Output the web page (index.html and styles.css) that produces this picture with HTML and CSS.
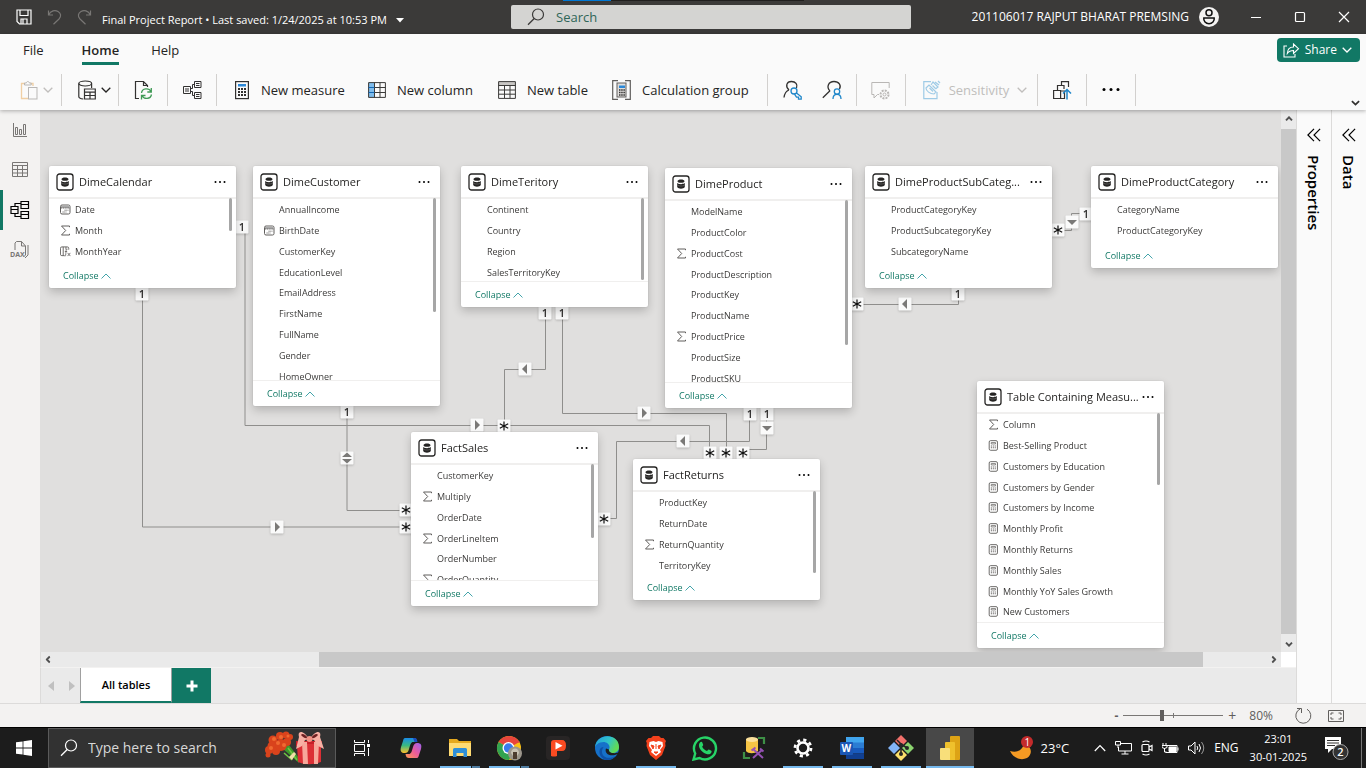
FILE: index.html
```html
<!DOCTYPE html>
<html lang="en">
<head>
<meta charset="utf-8">
<title>Final Project Report</title>
<link rel="stylesheet" href="styles.css">
</head>
<body>
<svg class="defs" aria-hidden="true">
  <symbol id="table" viewBox="0 0 18 18"><rect x="1" y="1" width="16" height="16" rx="2.500" fill="#fff" stroke="#252423" stroke-width="1.300"/><path d="M5.500 6.200C5.500 4 12.500 4 12.500 6.200S5.500 8.400 5.500 6.200z" fill="#252423"/><path d="M5.200 8c2 1.600 5.600 1.600 7.600 0v4c-1.200 2.300-6.400 2.300-7.600 0z" fill="#252423"/><path d="M5.500 10.300c2 1 5 1 7 0" stroke="#888" stroke-width=".5" fill="none"/></symbol>
  <symbol id="dots" viewBox="0 0 12 4"><circle cx="1.500" cy="2" r="1"/><circle cx="6" cy="2" r="1"/><circle cx="10.500" cy="2" r="1"/></symbol>
  <symbol id="sigma" viewBox="0 0 11 11"><path d="M9.500 2.200V1H1.500l4.200 4.500L1.500 10h8V8.800" fill="none" stroke="#605e5c"/></symbol>
  <symbol id="cal" viewBox="0 0 11 11"><rect x=".5" y="1" width="9.500" height="9" rx="1.500" fill="none" stroke="#605e5c"/><path d="M1 2h8.500v2H1z" fill="#aaa"/><path d="M1 4h9M4.500 6.200h4M2.500 8h4" stroke="#605e5c" stroke-width=".9" stroke-dasharray="1.200 .6"/></symbol>
  <symbol id="calcol" viewBox="0 0 12 12"><path d="M5 10.500H2A1.500 1.500 0 0 1 .5 9V2.500A1.500 1.500 0 0 1 2 1h6a1.500 1.500 0 0 1 1.500 1.500V4M3.500 1v9.500M6.500 1v3" fill="none" stroke="#605e5c"/><path d="M8.200 3.500c-1.800-.3-1.500 1.500-2 6.500-.1 1-.8 1-1.200.8M5.300 6h2.500M8.300 7.500l3 3.500m0-3.500-3 3.500" fill="none" stroke="#605e5c" stroke-width=".9"/></symbol>
  <symbol id="measure" viewBox="0 0 11 12"><rect x=".8" y=".7" width="9" height="10.500" rx="1.500" fill="none" stroke="#605e5c"/><path d="M3 2.800h4.700v1.500H3z" fill="none" stroke="#605e5c" stroke-width=".8"/><path d="M2.600 6.500h5.500M2.600 8.500h5.500" stroke="#605e5c" stroke-width="1.200" stroke-dasharray="1.200 .9"/></symbol>
  <symbol id="up" viewBox="0 0 10 6"><path d="M.5 5.500 5 1l4.500 4.500" fill="none" stroke="currentColor" stroke-width=".9"/></symbol>
  <symbol id="down" viewBox="0 0 10 6"><path d="M.7.800 5 5 9.300.800" fill="none" stroke="currentColor" stroke-width="1.300"/></symbol>
  <symbol id="lens" viewBox="0 0 18 18"><circle cx="11" cy="6.500" r="5.500" fill="none" stroke="currentColor" stroke-width="1.200"/><path d="M7.200 10.500 1 16.800" stroke="currentColor" stroke-width="1.300"/></symbol>
  <symbol id="dbl" viewBox="0 0 14 14"><path d="M7 .8.900 7 7 13.200M13.100.800 7 7l6.100 6.200" fill="none" stroke="#000" stroke-width="1.200"/></symbol>
  <symbol id="scr" viewBox="0 0 8 5"><path d="M1 4.300 4 1.300l3 3" fill="none" stroke="#505050" stroke-width="1.900"/></symbol>
  <symbol id="one" viewBox="-7 -7 14 14"><rect x="-6.500" y="-6.500" width="13" height="13" rx="1" fill="#fafafa"/></symbol>
  <symbol id="star" viewBox="-7 -7 14 14"><rect x="-6.500" y="-6.500" width="13" height="13" rx="1" fill="#fafafa"/><path d="M0-4.500v9M-4.200-2.300l8.400 4.600M4.200-2.300l-8.400 4.600" stroke="#111" stroke-width="1.200"/></symbol>
  <symbol id="ar" viewBox="-7 -7 14 14"><rect x="-6.500" y="-6.500" width="13" height="13" rx="1" fill="#fafafa"/><path d="M-2-5 3 0-2 5z" fill="#7a7977"/></symbol>
  <symbol id="al" viewBox="-7 -7 14 14"><rect x="-6.500" y="-6.500" width="13" height="13" rx="1" fill="#fafafa"/><path d="M2-5-3 0 2 5z" fill="#7a7977"/></symbol>
  <symbol id="ad" viewBox="-7 -7 14 14"><rect x="-6.500" y="-6.500" width="13" height="13" rx="1" fill="#fafafa"/><path d="M-5-2 0 3 5-2z" fill="#7a7977"/></symbol>
  <symbol id="ab" viewBox="-7 -7 14 14"><rect x="-6.500" y="-6.500" width="13" height="13" rx="1" fill="#fafafa"/><path d="M-5-1 0-5.500 5-1zM-5 1 0 5.500 5 1z" fill="#7a7977"/></symbol>
</svg>

<header class="title">
  <span class="peek"></span>
  <div class="title-left">
    <button aria-label="Save"><svg width="16" height="16" viewBox="0 0 16 16" fill="none" stroke="#fff" stroke-width="1.200"><path d="M1 1h14v14H3.500L1 12.500zM4 1v5.500h8V1M5 15v-5h6v5M7 10v5"/></svg></button>
    <button aria-label="Undo"><svg width="15" height="16" viewBox="0 0 15 16" fill="none" stroke="#797775" stroke-width="1.200"><path d="M1.500 1.500V6h4.500M1.500 6C4 1.500 8 .8 11 2.500s3.500 5 1 7.500l-5.500 5.200"/></svg></button>
    <button aria-label="Redo"><svg width="15" height="16" viewBox="0 0 15 16" fill="none" stroke="#797775" stroke-width="1.200"><path d="M13.500 1.500V6H9M13.500 6C11 1.500 7 .8 4 2.500s-3.500 5-1 7.500l5.500 5.200"/></svg></button>
    <button class="doc">Final Project Report • Last saved: 1/24/2025 at 10:53 PM <svg width="8" height="5" viewBox="0 0 8 5"><path d="M0 0h8L4 4.500z" fill="#fff"/></svg></button>
  </div>
  <label class="find"><svg width="18" height="18"><use href="#lens"/></svg><input type="text" placeholder="Search" aria-label="Search"></label>
  <div class="title-right">
    <span class="user">201106017 RAJPUT BHARAT PREMSING</span>
    <svg class="avatar" width="20" height="20" viewBox="0 0 20 20"><circle cx="10" cy="10" r="10" fill="#f3f2f1"/><circle cx="10" cy="5.800" r="3" fill="none" stroke="#111" stroke-width="1.500"/><path d="M4.800 11h10.400c.5 3-2 5.700-5.200 5.700S4.300 14 4.800 11z" fill="none" stroke="#111" stroke-width="1.500"/></svg>
    <button class="win" aria-label="Minimize"><svg width="12" height="12"><path d="M1 6.500h10" stroke="#fff"/></svg></button>
    <button class="win" aria-label="Maximize"><svg width="12" height="12"><rect x="1.500" y="1.500" width="9" height="9" rx="1" fill="none" stroke="#fff" stroke-width="1.200"/></svg></button>
    <button class="win" aria-label="Close"><svg width="12" height="12"><path d="M1 1l10 10M11 1 1 11" stroke="#fff" stroke-width="1.200"/></svg></button>
  </div>
</header>

<section class="ribbon">
  <nav class="menu">
    <a href="#file">File</a><a href="#home" class="on">Home</a><a href="#help">Help</a>
    <button class="share"><svg width="17" height="15" viewBox="0 0 17 15" fill="none" stroke="#fff" stroke-width="1.100"><path d="M4 3H1v11h11v-3"/><path d="M10.500 1v3C6 4 4.500 7 4.300 10.500 6 8 8 7.500 10.500 7.500v3L15.500 5.700z"/></svg><span>Share</span><svg width="10" height="6"><use href="#down"/></svg></button>
  </nav>
  <div class="tools">
    <div class="grp g-paste"><button class="off" aria-label="Paste" disabled><svg width="18" height="20" viewBox="0 0 18 20" fill="none"><path d="M5 3.500H1.500v15H8M10.500 3.500H13V6" stroke="#f0cfa4" stroke-width="1.300"/><path d="M4.500 5V3h1.800c.4-2 2.700-2 3.100 0h1.800v2z" stroke="#b9b7b5"/><rect x="8.500" y="7.500" width="8.500" height="11.500" stroke="#b9b7b5" fill="#fafafa"/></svg><svg width="10" height="6"><use href="#down"/></svg></button></div>
    <div class="grp g-data"><button aria-label="Get data"><svg width="18" height="20" viewBox="0 0 18 20" fill="none" stroke="#323130" stroke-width="1.200"><ellipse cx="7.200" cy="3.500" rx="6.400" ry="2.500"/><path d="M.8 3.500v13c0 1.300 2 2.300 4.500 2.500M13.600 3.500V8"/><path d="M6.500 9h10.800v10H6.500zM6.500 12.200h10.800M6.500 15.500h10.800M12 12v7" fill="#fafafa"/></svg><svg width="10" height="6"><use href="#down"/></svg></button></div>
    <div class="grp"><button aria-label="Refresh"><svg width="19" height="20" viewBox="0 0 19 20" fill="none"><path d="M5 18.500H1.500V1.500h8l4 4V7M9.500 1.500v4h4" stroke="#323130" stroke-width="1.200"/><path d="M7.500 13c.6-5 7.500-5.500 9.500-1.500M17.300 8v4h-4M17.500 14.500c-1 5-7.500 5-9.500 1.200M7.500 19.500v-4h4" stroke="#3f9a55" stroke-width="1.300"/></svg></button></div>
    <div class="grp"><button aria-label="Manage relationships"><svg width="19" height="20" viewBox="0 0 19 20" fill="none" stroke="#323130"><path d="M.5 6.500h7v7h-7zM11.500 1.500h6.500v6h-6.500zM11.500 12.500h6.500v6h-6.500zM2 9h4M2 11h4M13 3.500h3.500M13 5.500h3.500M13 14.500h3.500M13 16.500h3.500M7.500 8.500h2v-4h2M7.500 11.500h2v4h2"/></svg></button></div>
    <div class="grp g-calc">
      <button><svg width="16" height="20" viewBox="-1 0 16 20"><rect x=".6" y="1.600" width="12.800" height="17" fill="none" stroke="#323130" stroke-width="1.200"/><path d="M3 4h8v2.500H3z" fill="#2b88d8"/><path d="M3 9h8M3 12h8M3 15h8" stroke="#323130" stroke-width="2" stroke-dasharray="2 1"/></svg><span>New measure</span></button>
      <button><svg width="18" height="20" viewBox="0 0 18 20"><path d="M.5 2.500h6v15h-6z" fill="#7fbcec"/><path d="M.6 2.600h16.800v14.800H.6zM6.500 2.500v15M12 2.500v15M.5 7.500h17M.5 12.500h17" fill="none" stroke="#3b3a39"/><path d="M.5 7.500h6M.5 12.500h6" stroke="#1467b3"/></svg><span>New column</span></button>
      <button><svg width="18" height="20" viewBox="0 0 18 20"><path d="M.5 2h17v3H.5z" fill="#c8c6c4"/><path d="M.6 1.600h16.800v16.800H.6zM6.500 5v13M12 5v13M.5 5.500h17M.5 10h17M.5 14.200h17" fill="none" stroke="#3b3a39"/></svg><span>New table</span></button>
      <button><svg width="19" height="20" viewBox="0 0 19 20" fill="none"><path d="M6 .7H.7v18.600H6M13 .7h5.300v18.600H13" stroke="#605e5c" stroke-width="1.200"/><rect x="5" y="3" width="9" height="14" fill="#e1dfdd" stroke="#605e5c"/><path d="M7 5.500h6V8H7z" fill="#2b88d8"/><path d="M7 10h6M7 12.500h6M7 15h6" stroke="#323130" stroke-width="1.600" stroke-dasharray="1.500 .7"/></svg><span>Calculation group</span></button>
    </div>
    <div class="grp g-roles">
      <button aria-label="Manage roles"><svg width="20" height="20" viewBox="0 0 20 20" fill="none"><path d="M6 10C2 6.500 3.500 1.500 8.500 1.500c4 0 6.500 3 5 6.500M6 10C3 11 1.500 14 1 17.500" stroke="#323130" stroke-width="1.300"/><circle cx="11" cy="11" r="3" stroke="#1f86c9" stroke-width="1.300"/><path d="m13.200 12.800 5 4v2.400h-2.700v-2h-2l-2-3" stroke="#1f86c9" stroke-width="1.300"/></svg></button>
      <button aria-label="View as"><svg width="20" height="20" viewBox="0 0 20 20" fill="none"><path d="M8 11C4 7 6.500 1.500 12 1.500c5 0 7.500 4 5.500 7.500M8 10.700.8 17.800" stroke="#323130" stroke-width="1.300"/><circle cx="15" cy="11.500" r="2.700" stroke="#1f86c9" stroke-width="1.300"/><path d="M11 19c0-6.300 8-6.300 8 0" stroke="#1f86c9" stroke-width="1.300"/></svg></button>
    </div>
    <div class="grp"><button class="off" aria-label="Q&amp;A setup" disabled><svg width="20" height="20" viewBox="0 0 20 20" fill="none" stroke="#b9b7b5"><path d="M8 14.500H6.500L3 18v-3.500H.8v-12h17.400V8"/><circle cx="13.500" cy="14.500" r="1.500"/><circle cx="13.500" cy="14.500" r="4" stroke-width="2" stroke-dasharray="2 1.100"/></svg></button></div>
    <div class="grp g-sens"><button class="off" disabled><svg width="18" height="20" viewBox="0 0 18 20" fill="none" stroke="#9fcbe6" stroke-width="1.200"><path d="M8 1.600H.8v17H14V12"/><path d="m3 8 3-3 7 7-2 2c-4 0-8-3-8-6zM6.500 8l3.500 3.500M8 5l2-3 5 5-2.500 2M12 2l4 3M15 1l2 2M9.500 5.500l3 3"/></svg><span>Sensitivity</span><svg width="10" height="6"><use href="#down"/></svg></button></div>
    <div class="grp"><button aria-label="Publish"><svg width="19" height="20" viewBox="0 0 19 20" fill="none" stroke="#323130" stroke-width="1.200"><path d="M.6 10.500h7v8h-7zM4.500 10.500v-5H11V9M8.500 5.500V1.600h7V7M7.500 11h4v7.500h-4"/><path d="M14 19.500V9.500M10 13.500l4-4 4 4" stroke="#1f86c9" stroke-width="1.500"/></svg></button></div>
    <div class="grp"><button aria-label="More"><svg width="18" height="6" viewBox="0 0 18 6"><circle cx="2" cy="2.500" r="1.500"/><circle cx="9" cy="2.500" r="1.500"/><circle cx="16" cy="2.500" r="1.500"/></svg></button></div>
    <button class="fold" aria-label="Collapse ribbon"><svg width="9" height="6" viewBox="0 0 10 6"><path d="M1 1l4 3.800L9 1" fill="none" stroke="#323130" stroke-width="2"/></svg></button>
  </div>
</section>

<main class="work">
  <nav class="rail">
    <a href="#report" aria-label="Report view"><svg width="18" height="18" viewBox="0 0 18 18" fill="none" stroke="#797775"><path d="M2.500 2v13.500H16M4.500 6.500h2v7h-2zM8.500 8.500h2v5h-2zM12.500 3.500h2v10h-2z"/></svg></a>
    <a href="#data" aria-label="Table view"><svg width="18" height="18" viewBox="0 0 18 18" fill="none" stroke="#797775"><path d="M1.500 1.500h15v14h-15zM1.500 4.500h15M1.500 8.500h15M1.500 12h15M6.500 4.500v11M11.500 4.500v11"/></svg></a>
    <a href="#model" class="on" aria-label="Model view"><svg width="20" height="20" viewBox="0 0 20 20" fill="none" stroke="#000" stroke-width="1.200"><path d="M1 6.500h7v7H1zM11 1.500h7.500v7H11zM11 11.500h7.500v7H11zM1 9.500h7M11 4.500h7.500M11 14.500h7.500M5 6.500v-3h6M5 13.500v3h6"/></svg></a>
    <a href="#dax" aria-label="DAX query view"><svg width="20" height="20" viewBox="0 0 20 20" fill="none" stroke="#797775"><path d="M5 10V3l1.500-1.500h5L15.500 6v9L14 16.500M11.500 1.500V6h4M18 5v10l-3 3"/><text x="0" y="17" font-size="7" font-weight="700" fill="#797775" stroke="none">DAX</text></svg></a>
  </nav>

  <div class="stage">
    <div class="view">
      <div class="canvas">
        <svg class="links" width="1241" height="542" viewBox="40 110 1241 542">
          <g fill="none" stroke="#8f8e8c" stroke-width="1">
            <path d="M142.500 288v239H411M347 406v104.500H411M245 227v198.500h464.500V453M545.500 307v62.500h-41V426M562.500 307v106.500h164V453M749.500 408v33.500h-133v77H604M766.500 408v41.500H743M958.500 288v16.500H857M1086 213.500h-14.500v17H1058"/>
          </g>
          <g class="marks">
            <use href="#one" x="135" y="287" width="14" height="14"/><use href="#one" x="235" y="220" width="14" height="14"/><use href="#one" x="340" y="405" width="14" height="14"/><use href="#one" x="538" y="306" width="14" height="14"/><use href="#one" x="555" y="306" width="14" height="14"/><use href="#one" x="743" y="407" width="14" height="14"/><use href="#one" x="760" y="407" width="14" height="14"/><use href="#one" x="951" y="287" width="14" height="14"/><use href="#one" x="1079" y="207" width="14" height="14"/>
            <use href="#star" x="399" y="503" width="14" height="14"/><use href="#star" x="399" y="520" width="14" height="14"/><use href="#star" x="497" y="419" width="14" height="14"/><use href="#star" x="597" y="512" width="14" height="14"/><use href="#star" x="703" y="446" width="14" height="14"/><use href="#star" x="719" y="446" width="14" height="14"/><use href="#star" x="736" y="446" width="14" height="14"/><use href="#star" x="850" y="297" width="14" height="14"/><use href="#star" x="1051" y="223" width="14" height="14"/>
            <use href="#ar" x="270" y="520" width="14" height="14"/><use href="#ar" x="470" y="418" width="14" height="14"/><use href="#ar" x="637" y="406" width="14" height="14"/>
            <use href="#al" x="518" y="362" width="14" height="14"/><use href="#al" x="676" y="434" width="14" height="14"/><use href="#al" x="898" y="297" width="14" height="14"/>
            <use href="#ad" x="760" y="421" width="14" height="14"/><use href="#ad" x="1065" y="215" width="14" height="14"/><use href="#ab" x="340" y="451" width="14" height="14"/>
          </g>
          <g class="ones"><text x="142" y="298">1</text><text x="242" y="231">1</text><text x="347" y="416">1</text><text x="545" y="317">1</text><text x="562" y="317">1</text><text x="750" y="418">1</text><text x="767" y="418">1</text><text x="958" y="298">1</text><text x="1086" y="218">1</text></g>
        </svg>

        <article class="node calendar"><h2><svg width="18" height="18"><use href="#table"/></svg><span>DimeCalendar</span><button aria-label="More options"><svg width="12" height="4"><use href="#dots"/></svg></button></h2>
          <ul><li><svg><use href="#cal"/></svg>Date</li><li><svg><use href="#sigma"/></svg>Month</li><li><svg><use href="#calcol"/></svg>MonthYear</li></ul><i class="thumb"></i>
          <button class="less">Collapse <svg width="10" height="6"><use href="#up"/></svg></button></article>

        <article class="node customer"><h2><svg width="18" height="18"><use href="#table"/></svg><span>DimeCustomer</span><button aria-label="More options"><svg width="12" height="4"><use href="#dots"/></svg></button></h2>
          <ul><li>AnnualIncome</li><li><svg><use href="#cal"/></svg>BirthDate</li><li>CustomerKey</li><li>EducationLevel</li><li>EmailAddress</li><li>FirstName</li><li>FullName</li><li>Gender</li><li>HomeOwner</li></ul><i class="thumb"></i>
          <button class="less ruled">Collapse <svg width="10" height="6"><use href="#up"/></svg></button></article>

        <article class="node teritory"><h2><svg width="18" height="18"><use href="#table"/></svg><span>DimeTeritory</span><button aria-label="More options"><svg width="12" height="4"><use href="#dots"/></svg></button></h2>
          <ul><li>Continent</li><li>Country</li><li>Region</li><li>SalesTerritoryKey</li></ul><i class="thumb"></i>
          <button class="less ruled">Collapse <svg width="10" height="6"><use href="#up"/></svg></button></article>

        <article class="node product"><h2><svg width="18" height="18"><use href="#table"/></svg><span>DimeProduct</span><button aria-label="More options"><svg width="12" height="4"><use href="#dots"/></svg></button></h2>
          <ul><li>ModelName</li><li>ProductColor</li><li><svg><use href="#sigma"/></svg>ProductCost</li><li>ProductDescription</li><li>ProductKey</li><li>ProductName</li><li><svg><use href="#sigma"/></svg>ProductPrice</li><li>ProductSize</li><li>ProductSKU</li></ul><i class="thumb"></i>
          <button class="less ruled">Collapse <svg width="10" height="6"><use href="#up"/></svg></button></article>

        <article class="node subcategory"><h2><svg width="18" height="18"><use href="#table"/></svg><span>DimeProductSubCateg...</span><button aria-label="More options"><svg width="12" height="4"><use href="#dots"/></svg></button></h2>
          <ul><li>ProductCategoryKey</li><li>ProductSubcategoryKey</li><li>SubcategoryName</li></ul>
          <button class="less">Collapse <svg width="10" height="6"><use href="#up"/></svg></button></article>

        <article class="node category"><h2><svg width="18" height="18"><use href="#table"/></svg><span>DimeProductCategory</span><button aria-label="More options"><svg width="12" height="4"><use href="#dots"/></svg></button></h2>
          <ul><li>CategoryName</li><li>ProductCategoryKey</li></ul>
          <button class="less">Collapse <svg width="10" height="6"><use href="#up"/></svg></button></article>

        <article class="node sales"><h2><svg width="18" height="18"><use href="#table"/></svg><span>FactSales</span><button aria-label="More options"><svg width="12" height="4"><use href="#dots"/></svg></button></h2>
          <ul><li>CustomerKey</li><li><svg><use href="#sigma"/></svg>Multiply</li><li>OrderDate</li><li><svg><use href="#sigma"/></svg>OrderLineItem</li><li>OrderNumber</li><li><svg><use href="#sigma"/></svg>OrderQuantity</li></ul><i class="thumb"></i>
          <button class="less ruled">Collapse <svg width="10" height="6"><use href="#up"/></svg></button></article>

        <article class="node returns"><h2><svg width="18" height="18"><use href="#table"/></svg><span>FactReturns</span><button aria-label="More options"><svg width="12" height="4"><use href="#dots"/></svg></button></h2>
          <ul><li>ProductKey</li><li>ReturnDate</li><li><svg><use href="#sigma"/></svg>ReturnQuantity</li><li>TerritoryKey</li></ul><i class="thumb"></i>
          <button class="less">Collapse <svg width="10" height="6"><use href="#up"/></svg></button></article>

        <article class="node measures"><h2><svg width="18" height="18"><use href="#table"/></svg><span>Table Containing Measu...</span><button aria-label="More options"><svg width="12" height="4"><use href="#dots"/></svg></button></h2>
          <ul><li><svg><use href="#sigma"/></svg>Column</li><li><svg><use href="#measure"/></svg>Best-Selling Product</li><li><svg><use href="#measure"/></svg>Customers by Education</li><li><svg><use href="#measure"/></svg>Customers by Gender</li><li><svg><use href="#measure"/></svg>Customers by Income</li><li><svg><use href="#measure"/></svg>Monthly Profit</li><li><svg><use href="#measure"/></svg>Monthly Returns</li><li><svg><use href="#measure"/></svg>Monthly Sales</li><li><svg><use href="#measure"/></svg>Monthly YoY Sales Growth</li><li><svg><use href="#measure"/></svg>New Customers</li></ul><i class="thumb"></i>
          <button class="less ruled">Collapse <svg width="10" height="6"><use href="#up"/></svg></button></article>
      </div>
      <div class="vbar"><svg width="8" height="5"><use href="#scr"/></svg><span></span><svg class="r180" width="8" height="5"><use href="#scr"/></svg></div>
    </div>
    <div class="hrow"><div class="hbar"><svg class="r270" width="8" height="5"><use href="#scr"/></svg><span></span><svg class="r90" width="8" height="5"><use href="#scr"/></svg></div></div>
    <div class="tabs">
      <button class="step" aria-label="Previous"><svg width="6" height="10"><path d="M6 0v10L0 5z" fill="#c0c0c0"/></svg></button>
      <button class="step" aria-label="Next"><svg width="6" height="10"><path d="M0 0v10l6-5z" fill="#c0c0c0"/></svg></button>
      <button class="tab">All tables</button>
      <button class="add" aria-label="Add layout"><svg width="12" height="12"><path d="M6 .5v11M.5 6h11" stroke="#fff" stroke-width="3"/></svg></button>
    </div>
  </div>

  <aside class="pane"><svg width="14" height="14"><use href="#dbl"/></svg><h3>Properties</h3></aside>
  <aside class="pane"><svg width="14" height="14"><use href="#dbl"/></svg><h3>Data</h3></aside>
</main>

<footer class="status">
  <button class="minus">-</button><input type="range" min="0" max="100" value="38" aria-label="Zoom"><button class="plus">+</button>
  <span class="pct">80%</span>
  <button aria-label="Reset zoom"><svg width="18" height="18" viewBox="0 0 18 18" fill="none" stroke="#605e5c"><path d="M12 2.200a7.500 7.500 0 1 1-7-.2M2 1.500h4.500V6"/></svg></button>
  <button class="fit" aria-label="Fit to page"><svg width="16" height="12" viewBox="0 0 16 12" fill="none" stroke="#605e5c"><path d="M.5.5h15v11H.5zM3 5V3h2.500M10.500 3H13v2M13 7v2h-2.500M5.500 9H3V7"/></svg></button>
</footer>

<div class="taskbar">
  <button class="start" aria-label="Start"><svg width="16" height="16" viewBox="0 0 16 16" fill="#fff"><path d="M0 2.300 6.600 1.400v6.200H0zM7.400 1.300 16 0v7.600H7.400zM0 8.400h6.600v6.200L0 13.700zM7.400 8.400H16V16l-8.600-1.200z"/></svg></button>
  <label class="search"><svg width="18" height="18"><use href="#lens"/></svg><input type="text" placeholder="Type here to search" aria-label="Type here to search">
    <svg width="60" height="34" viewBox="0 0 60 34"><path d="m18 17 7-3 10 13v5z" fill="#3e9a2a"/><path d="m20 22 8 7M24 17l9 12" stroke="#6fc646" stroke-width="1.500"/><path d="m25 26 5-5 2 2-4 6z" fill="#efe0a8"/><g fill="#d9431c"><circle cx="9" cy="9" r="4.500"/><circle cx="16" cy="5" r="4"/><circle cx="22" cy="4" r="3.500"/><circle cx="26" cy="6" r="3"/><circle cx="8" cy="15" r="4.500"/><circle cx="5" cy="19" r="4"/><circle cx="4" cy="24" r="2.500"/><circle cx="12" cy="20" r="4"/><circle cx="17" cy="14" r="6"/><circle cx="23" cy="11" r="4"/></g><g fill="#ef6a31"><circle cx="10" cy="8" r="2"/><circle cx="17" cy="6" r="2"/><circle cx="14" cy="12" r="2"/><circle cx="20" cy="14" r="2"/><circle cx="7" cy="17" r="2"/><circle cx="24" cy="5" r="1.500"/></g><path d="M32 10h26v5H32z" fill="#c71f28"/><path d="m33 13 1 18c7 3 15 3 23 0V13z" fill="#dc2f35"/><path d="m38 11 1 22h5l-1-22zM50 11v22h4l1-22z" fill="#f7a79a"/><path d="M45 8C40-1 33-1 35 6l-3 12 6-3 3-6zM46 8C51-1 58-1 56 6l4 12-6-3-4-6z" fill="#f7b0a4"/><path d="M44 7c-3-4-6-5-7-3 2 2 4 4 7 3zM47 7c3-4 6-5 7-3-2 2-4 4-7 3z" fill="#6e2021"/><circle cx="45.500" cy="8" r="3" fill="#f29284"/></svg></label>
  <div class="apps">
    <button aria-label="Task view"><svg width="18" height="18" viewBox="0 0 18 18" fill="none" stroke="#fff"><path d="M1.500 1v2.500h10V1M1.500 5.500h10v7h-10zM1.500 17v-2.500h10V17M15.500 1v3M15.500 9v8"/><path d="M14 5h3v3h-3z" fill="#fff" stroke="none"/></svg></button>
    <button aria-label="Copilot"><svg width="22" height="22" viewBox="0 0 22 22"><defs><linearGradient id="c1" x1="0" y1="0" x2="0" y2="1"><stop stop-color="#1a8ce8"/><stop offset=".5" stop-color="#39b980"/><stop offset="1" stop-color="#ffc02b"/></linearGradient><linearGradient id="c2" x1="1" y1="0" x2="0" y2="1"><stop stop-color="#9a62ef"/><stop offset=".5" stop-color="#ec5b9b"/><stop offset="1" stop-color="#ff9a4c"/></linearGradient></defs><path d="M5 1h9c2 0 2.500 1.500 3 4h-4c-2 0-2.500 2-4 7-.8 3-2 4-4 4C1 16 0 14 1 10L3 4c.4-2 1-3 2-3z" fill="url(#c1)"/><path d="M17 21H9c-2 0-3-1-3.500-4h3.500c2 0 2.600-2 4-7 1-3 2-4 4-4 4 0 5 2 4 6l-2 6c-.5 2-1 3-2 3z" fill="url(#c2)"/><path d="M13 1h2c1.500 0 2 1.500 2.500 4h-3z" fill="#1c4bbf"/></svg></button>
    <button class="run more" aria-label="File Explorer"><svg width="22" height="20" viewBox="0 0 22 20"><path d="M0 1h8l2 2h12v15H0z" fill="#e5a91f"/><path d="M0 5h22v13H0z" fill="#ffdb73"/><path d="M4 11.500q0-1.500 1.500-1.500h11q1.500 0 1.500 1.500V19h-3.500v-4h-7v4H4z" fill="#2f8fd8"/></svg></button>
    <button class="run more" aria-label="Chrome"><svg width="27" height="26" viewBox="0 0 27 26"><circle cx="13" cy="13" r="12" fill="#fbc116"/><path d="M13 13 2.600 7a12 12 0 0 1 20.800 0z" fill="#e8453c"/><path d="M13 13 2.600 7A12 12 0 0 0 13 25l5-9z" fill="#32a350"/><path d="M13 7h10.400" stroke="#e8453c"/><circle cx="12.500" cy="13" r="6" fill="#fff"/><circle cx="12.500" cy="13" r="4.700" fill="#3a7cec"/><circle cx="19" cy="18.500" r="7" fill="#9c968b"/><path d="M15 18c0-6 8-6 8 0l-2 3h-4z" fill="#c9c2b3"/><path d="M17 17h4v7h-4z" fill="#4d3c2f"/></svg></button>
    <button aria-label="Presenter"><svg width="24" height="24" viewBox="0 0 24 24"><rect width="24" height="24" rx="4" fill="#282525"/><path d="M5 20V7q0-3 3-3h8q4 0 4 5.500T16 15h-5v5q-3 1-6 0z" fill="#fb4b22"/><path d="m9.500 6 7 3.700-7 3.800z" fill="#fff"/></svg></button>
    <button aria-label="Edge"><svg width="26" height="26" viewBox="0 0 26 26"><defs><linearGradient id="e1" x1="0" y1="0" x2="1" y2=".4"><stop stop-color="#229de0"/><stop offset=".6" stop-color="#31c4c7"/><stop offset="1" stop-color="#61da56"/></linearGradient></defs><circle cx="13" cy="13" r="12" fill="#1671c9"/><path d="M1 13C1-2 25-3 25 12c0 4-3 6-7 6-3 0-4.500-1-3.500-3 3-4-1-8-5-8C5 7 1 10 1 13z" fill="url(#e1)"/><path d="M9.500 12c-5 8 3 14 12 9-6 8-17 3-16-5 .4-3 2-4 4-4z" fill="#0e51a7"/><path d="M12 13.500c-2 5 4 9 12 5.500l1.500-2c-4 2-11 1.500-10.500-2.500z" fill="#1f1f1f"/></svg></button>
    <button class="run" aria-label="Brave"><svg width="20" height="24" viewBox="0 0 20 24"><path d="m5 2 2-2h6l2 2 2.500 0L20 5l-.8 2 .3 3-3.500 9-6 5-6-5L.5 10l.3-3L0 5l2.500-3z" fill="#f3411c"/><path d="m3.500 6 4-1L10 6l2.500-1 4 1 .5 4-3 4 1 2-5 4-5-4 1-2-3-4z" fill="#fff"/><path d="m5 9 3 1-1 3zm10 0-3 1 1 3zM8 16h4l-2 1.500zM10 8v5" fill="#f3411c" stroke="#f3411c"/></svg></button>
    <button aria-label="WhatsApp"><svg width="26" height="26" viewBox="0 0 26 26"><path d="m1.500 24.500 1.700-6A11 11 0 1 1 7.500 23z" fill="none" stroke="#27d367" stroke-width="2.400"/><path d="M8 7.500c1-1.200 2-.8 2.300 0l.9 2.200c.2.700-.8 1.500-1 2 1 2 2.500 3.500 4.800 4.300.6-.4 1.200-1.700 1.900-1.500l2.400 1.200c.9.600 0 2.600-1.300 3.200-3 1.500-8.500-2-10.500-6-1-2-.6-4.400.5-5.400z" fill="#27d367"/></svg></button>
    <button aria-label="SQL Server"><svg width="24" height="24" viewBox="0 0 24 24"><path d="M16 2h6v6M2 16v6h6" fill="none" stroke="#3d8f46" stroke-width="2.200"/><path d="M4 3v12c2 3 9 3 12 0V3z" fill="#f5c445"/><ellipse cx="10" cy="3.500" rx="6" ry="2.500" fill="#fbe09b"/><path d="m11 13 10 9M20 14l-9 8M9.500 14.500l4-3M18 12.500l3.500 3" stroke="#9551b4" stroke-width="2"/></svg></button>
    <button class="run" aria-label="Settings"><svg width="20" height="20" viewBox="0 0 20 20" fill="none" stroke="#fff"><circle cx="10" cy="10" r="5.500" stroke-width="2.600"/><circle cx="10" cy="10" r="8" stroke-width="2.800" stroke-dasharray="3.140 3.140"/></svg></button>
    <button class="run" aria-label="Word"><svg width="24" height="22" viewBox="0 0 24 22"><path d="M6 0h18v6H6z" fill="#41a5ee"/><path d="M6 5.500h18V11H6z" fill="#2b7cd3"/><path d="M6 11h18v5.500H6z" fill="#185abd"/><path d="M6 16.500h18V22H6z" fill="#103f91"/><rect y="5" width="13" height="13" rx="1" fill="#1b57b5"/><text x="1.500" y="15" font-size="10" font-weight="700" fill="#fff">W</text></svg></button>
    <button class="run" aria-label="Git"><svg width="26" height="26" viewBox="0 0 26 26"><path d="m13 0 6 6-6 6-6-6z" fill="#f2706b"/><path d="m6 7 6 6-6 6-6-6z" fill="#82b4f7"/><path d="m20 7 6 6-6 6-6-6z" fill="#8bd46f"/><path d="m13 14 6 6-6 6-6-6z" fill="#fbdf6b"/><path d="M9 5l4 4v10M13 9l6 4" fill="none" stroke="#262626" stroke-width="1.600"/><circle cx="13" cy="10" r="2" fill="#262626"/><circle cx="19" cy="13" r="2" fill="#262626"/><circle cx="13" cy="19" r="2" fill="#262626"/></svg></button>
    <button class="run active" aria-label="Power BI"><svg width="20" height="24" viewBox="0 0 20 24"><rect x="10" width="10" height="24" rx="1" fill="#dda315"/><path d="M5 7q0-1 1-1h8q1 0 1 1v17H5z" fill="#efc12c"/><path d="M0 13q0-1 1-1h8q1 0 1 1v11H1q-1 0-1-1z" fill="#f8df7a"/></svg></button>
  </div>
  <div class="tray">
    <span class="weather"><svg width="24" height="24" viewBox="0 0 24 24"><path d="M0 15c6 2 12 0 14-7 8 2 9 10 3 14C11 25 3 22 0 15z" fill="#f49a23"/><circle cx="17" cy="6" r="6" fill="#c42b2b"/><text x="14.500" y="10" font-size="10" fill="#fff">1</text></svg>23°C</span>
    <svg width="12" height="8" viewBox="0 0 12 8" fill="none" stroke="#fff" stroke-width="1.200"><path d="m.8 7 5.200-5.500L11.200 7"/></svg>
    <svg width="17" height="14" viewBox="0 0 17 14" fill="none" stroke="#fff"><path d="M6 2.500h10.500v7.500H3.500V6M10 10v3M6.500 13h7M.5.500h5v3.500h-5zM3 4v3"/></svg>
    <svg width="12" height="16" viewBox="0 0 12 16" fill="none" stroke="#fff" stroke-width="1.200"><rect x="1" y="4.500" width="7" height="7" rx="1"/><path d="m8 7 3-1.500v5L8 9M1.500 2q3.500-2 7 0M1.500 14q3.500 2 7 0"/></svg>
    <svg width="17" height="12" viewBox="0 0 17 12" fill="none" stroke="#fff"><path d="M5 3.500h10v7H3.500"/><path d="M7 5h7v4.500H7z" fill="#fff"/><path d="M16 5.500v3M1 1v2M4 1v2M0 3.500h5v2q-2.500 2-5 0zM2.500 6v4h2"/></svg>
    <svg width="17" height="14" viewBox="0 0 17 14" fill="none" stroke="#fff"><path d="M.5 5h2.500l4-4v12L3 9H.500zM9 5q1.500 2 0 4M11 3q3 4 0 8"/><path d="M13.500 1q4.500 6 0 12" stroke="#999"/></svg>
    <span class="lang">ENG</span>
    <time>23:01<br>30-01-2025</time>
    <button class="note" aria-label="Notifications"><svg width="26" height="26" viewBox="0 0 26 26"><path d="M1 2h16v12H8l-4 4v-4H1z" fill="#fff"/><path d="M3 5.500h12M3 8h12M3 10.500h8" stroke="#333"/><circle cx="16.500" cy="17" r="7.500" fill="#333" stroke="#aaa"/><text x="13.300" y="21" font-size="11" font-weight="600" fill="#fff">2</text></svg></button>
  </div>
</div>
</body>
</html>
```

FILE: styles.css
```css
* { box-sizing: border-box; }
html, body { height: 100%; }
body { margin: 0; display: flex; flex-direction: column; overflow: hidden; font: 13px/20px "Open Sans", "Noto Sans", sans-serif; color: #252423; background: #f3f2f1; }
button { border: 0; padding: 0; margin: 0; background: none; font: inherit; color: inherit; display: flex; align-items: center; }
svg { display: block; flex: none; }
a { color: inherit; text-decoration: none; }
.defs { position: absolute; width: 0; height: 0; }

.title { position: relative; flex: none; height: 34px; display: grid; grid-template-columns: 511fr 400fr 455fr; align-items: center; background: #3b3a39; color: #fff; font-size: 11px; }
.peek { position: absolute; left: 563px; top: 0; width: 241px; height: 1px; background: linear-gradient(90deg, #0078d4 48px, #201f1e 48px); }
.title-left { display: flex; align-items: center; gap: 15px; padding-left: 16px; }
.title-left .doc { gap: 9px; margin-left: -5px; padding-top: 6px; white-space: nowrap; }
.find { display: flex; align-items: center; gap: 11px; height: 24px; padding-left: 16px; background: #d4d4d2; border-radius: 2px; color: #3b3a39; }
.find input { flex: 1; min-width: 0; border: 0; padding: 0; background: none; font: inherit; font-size: 13px; outline: 0; }
.find input::placeholder { color: #2f6658; opacity: 1; }
.title-right { display: flex; align-items: center; justify-content: flex-end; padding-right: 16px; }
.user { font-size: 12px; white-space: nowrap; }
.avatar { margin: 0 31px 0 10px; }
.win + .win { margin-left: 32px; }

.ribbon { position: relative; z-index: 2; flex: none; height: 76px; background: #fafafa; box-shadow: 0 1px 4px rgba(0,0,0,.3); }
.menu { display: flex; align-items: flex-start; height: 36px; padding: 0 6px 0 23px; }
.menu a { height: 31px; padding-top: 6px; border-bottom: 3px solid transparent; margin-right: 32px; }
.menu a:first-child { margin-right: 38px; }
.menu .on { font-weight: 600; border-color: #117865; }
.share { margin-left: auto; margin-top: 4px; height: 24px; padding: 0 8px 0 6px; gap: 5px; border-radius: 4px; background: #117865; color: #fff; font-size: 12px; }
.tools { display: flex; align-items: center; height: 40px; }
.grp { height: 32px; width: 49px; display: flex; align-items: center; justify-content: center; border-right: 1px solid #d2d0ce; }
.grp button { gap: 5px; white-space: nowrap; }
.g-paste { width: 62px; padding-left: 12px; }
.g-data { width: 57px; padding-left: 9px; }
.g-calc { width: 551px; display: grid; grid-template-columns: 134px 130px 114px 1fr; justify-content: start; padding-left: 17px; }
.grp.g-calc button { gap: 11px; }
.g-roles { width: 89px; gap: 19px; }
.g-sens { width: 132px; padding-left: 7px; }
.grp.g-sens button { gap: 8px; }
.off { color: #c0bebc; }
.fold { margin: 26px 6px 0 auto; }

.work { flex: 1; min-height: 0; display: flex; }
.rail { width: 40px; flex: none; background: #f3f2f1; }
.rail a { height: 40px; display: flex; align-items: center; justify-content: center; border-left: 3px solid transparent; padding-right: 3px; }
.rail .on { border-color: #117865; }
.stage { flex: 1; min-width: 0; display: flex; flex-direction: column; }
.view { flex: 1; min-height: 0; display: flex; }
.canvas { position: relative; flex: 1; min-width: 0; overflow: hidden; background: #e0dfde; }
.links { position: absolute; left: 0; top: 0; }
.marks { filter: drop-shadow(0 1px 1px rgba(0,0,0,.2)); }
.ones { font-size: 11px; font-weight: 600; fill: #323130; text-anchor: middle; }

.node { position: absolute; width: 187px; background: #fff; border-radius: 2px; box-shadow: 0 4px 10px rgba(0,0,0,.2), 0 0 2px rgba(0,0,0,.12); }
.node h2 { margin: 0; height: 33px; display: flex; align-items: center; gap: 5px; padding: 0 10px 0 7px; border-bottom: 2px solid #f0efee; font-size: 11px; font-weight: 400; white-space: nowrap; }
.node h2 button { margin-left: auto; }
.node h2 span { flex: 0 1 auto; min-width: 0; }
.node ul { list-style: none; margin: 0; padding: 0; overflow: hidden; }
.node li { position: relative; height: 21px; line-height: 21px; padding-left: 26px; font-size: 9px; color: #3b3a39; white-space: nowrap; }
.node li:nth-child(5n + 4) { height: 20px; }
.node li svg { position: absolute; left: 11px; top: 5px; width: 11px; height: 11px; }
.thumb { position: absolute; right: 4px; top: 32px; width: 3px; border-radius: 2px; background: #a6a6a6; }
.less { width: 100%; height: 26px; gap: 3px; padding-left: 14px; font-size: 9px; color: #117865; border-top: 1px solid transparent; }
.less svg { color: #2e9aa0; }
.less.ruled { border-color: #f0efee; }
.calendar { left: 9px; top: 56px; } .calendar .thumb { height: 33px; }
.customer { left: 213px; top: 56px; } .customer ul { height: 181px; } .customer .thumb { height: 114px; }
.teritory { left: 421px; top: 56px; } .teritory ul, .returns ul { height: 82px; } .teritory .thumb, .returns .thumb { height: 82px; }
.product { left: 625px; top: 58px; } .product ul { height: 181px; } .product .thumb { height: 145px; }
.subcategory { left: 825px; top: 56px; }
.category { left: 1051px; top: 56px; } .category ul { padding-bottom: 1px; }
.sales { left: 371px; top: 322px; } .sales ul { height: 115px; } .sales .thumb { height: 74px; }
.returns { left: 593px; top: 349px; }
.measures { left: 937px; top: 271px; } .measures ul { height: 208px; } .measures .thumb { height: 72px; }

.vbar { width: 15px; flex: none; display: flex; flex-direction: column; align-items: center; gap: 8px; padding: 6px 0 5px; background: #eaeaea; }
.vbar span { flex: 1; width: 100%; background: #c8c8c8; }
.hrow { flex: none; display: flex; height: 16px; padding-right: 15px; border-bottom: 1px solid #f3f2f1; border-left: 1px solid #dcdbda; background: #fff; }
.hbar { flex: 1; display: flex; align-items: center; padding: 0 3px; background: #eaeaea; }
.hbar span { flex: 1; height: 15px; margin-left: 267px; margin-right: 67px; background: #c8c8c8; }
.r90 { transform: rotate(90deg); } .r180 { transform: rotate(180deg); } .r270 { transform: rotate(270deg); }
.tabs { flex: none; display: flex; height: 35px; background: #eaeaea; border-left: 1px solid #dcdbda; }
.step { width: 19px; justify-content: center; }
.step + .step { width: 20px; padding-left: 3px; }
.tab { width: 92px; justify-content: center; background: #fff; border: 1px solid #a0a0a0; border-top: 0; border-bottom: 2px solid #117865; font-size: 11px; font-weight: 600; color: #000; }
.add { width: 39px; justify-content: center; background: #117865; }
.pane { flex: none; width: 35px; padding-top: 18px; background: #fafafa; border-left: 1px solid #dcdbda; display: flex; flex-direction: column; align-items: center; }
.pane h3 { margin: 13px 0 0; writing-mode: vertical-rl; font-size: 15px; font-weight: 600; color: #000; }

.status { flex: none; height: 24px; display: flex; align-items: center; justify-content: flex-end; padding-right: 22px; border-top: 1px solid #dcdbda; color: #605e5c; font-size: 12px; }
.status .minus { font-weight: 700; }
.status .plus { font-size: 14px; margin: 0 13px 0 5px; }
.status .pct { margin-right: 22px; }
.status .fit { margin-left: 15px; }
.status input { appearance: none; width: 100px; height: 12px; margin: 0 0 0 5px; background: linear-gradient(#797775, #797775) 50px 50% / 1px 5px no-repeat, linear-gradient(#797775, #797775) 0 50% / 100% 1px no-repeat; }
.status input::-webkit-slider-thumb { appearance: none; width: 4px; height: 11px; background: #605e5c; }

.taskbar { flex: none; height: 41px; display: flex; background: #1c1c1c; border-top: 1px solid #000; color: #fff; }
.start { width: 48px; justify-content: center; }
.search { width: 288px; display: flex; align-items: center; gap: 10px; padding: 0 11px; background: #323232; border: 1px solid #5a5a5a; }
.search input { flex: 1; min-width: 0; border: 0; padding: 0; background: none; font: inherit; font-size: 14px; outline: 0; }
.search input::placeholder { color: #d8d8d8; opacity: 1; }
.apps { display: flex; gap: 1px; margin-left: 2px; }
.apps button { width: 48px; justify-content: center; border-bottom: 2px solid transparent; border-top: 2px solid transparent; }
.apps .run { background: linear-gradient(#76b9ed, #76b9ed) 50% 100% / 40px 2px no-repeat border-box; }
.apps .more { background: linear-gradient(90deg, #76b9ed 31px, #1c1c1c 31px, #1c1c1c 32px, #4f7ca0 32px) 50% 100% / 40px 2px no-repeat border-box; }
.apps .active { background-color: #484848; background-size: 100% 2px; }
.tray { margin-left: auto; display: flex; align-items: center; gap: 9px; padding-right: 4px; }
.weather { display: flex; align-items: center; gap: 7px; margin-right: 16px; }
.lang { font-size: 12px; }
time { font-size: 11px; line-height: 18px; text-align: center; margin-left: 2px; }
.note { padding-right: 11px; margin-left: 8px; border-right: 1px solid #777; height: 100%; }
```
